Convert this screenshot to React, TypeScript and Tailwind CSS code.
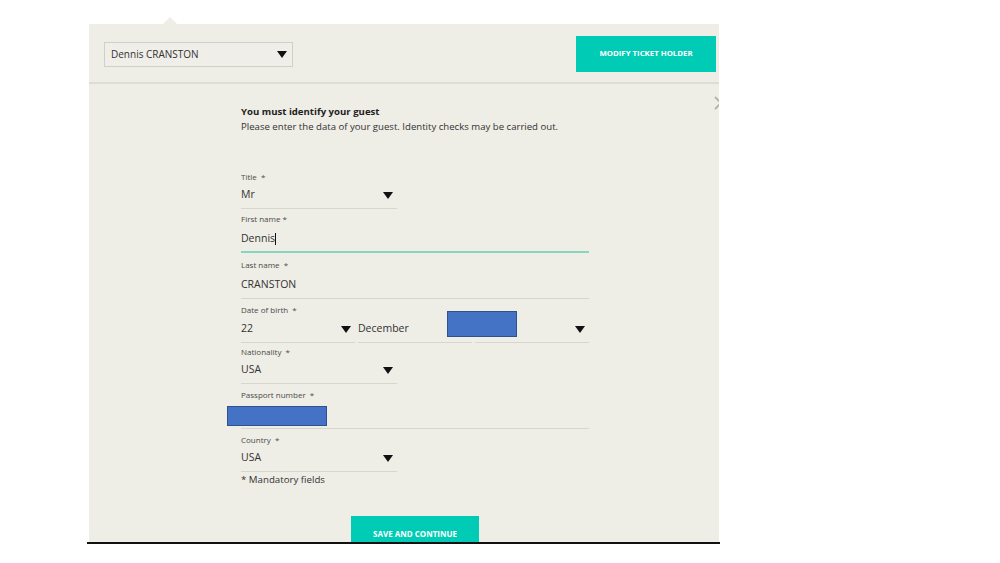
import React from 'react'

const font = { fontFamily: '"Open Sans", "Liberation Sans", sans-serif' }

const Arrow = ({ className = '' }: { className?: string }) => (
    <svg viewBox="0 0 10 7" className={`w-[10px] h-[7px] ${className}`}>
        <polygon points="0,0 10,0 5,7" fill="#111" />
    </svg>
)

interface FieldProps {
    label: string
    children: React.ReactNode
    wide?: boolean
    gap?: string
    row?: string
    line?: string
}

const Field = ({ label, children, wide, gap = 'mt-[5px]', row = 'h-[27px] pt-[5px]', line = 'border-b border-[#d6d5ce]' }: FieldProps) => (
    <div className={`${gap} ${wide ? 'w-[348px]' : 'w-[156px]'}`}>
        <div className="text-[8px] leading-[10px] text-[#4a4a4a] whitespace-pre">{label}</div>
        <div className={`${row} ${line}`}>{children}</div>
    </div>
)

const SelectValue = ({ value }: { value: string }) => (
    <div className="flex items-center justify-between h-[16px] pr-[4px]">
        <span className="text-[10.5px] text-[#333]">{value}</span>
        <Arrow />
    </div>
)

export default function App() {
    return (
        <div className="w-[1000px] h-[563px] bg-white relative overflow-hidden" style={font}>
            <div className="absolute left-[163px] top-[17px] w-0 h-0 border-l-[7px] border-r-[7px] border-b-[7px] border-l-transparent border-r-transparent border-b-[#eeede6]" />
            <div className="ml-[89px] mt-[24px] w-[630px] h-[518px] bg-[#eeede6] relative overflow-hidden">
                {/* header */}
                <div className="h-[60px] border-b-2 border-[#dddcd5] flex items-start justify-between">
                    <div className="ml-[15px] mt-[18px] w-[189px] h-[25px] border border-[#d0cfc8] bg-[#efeee8] flex items-center justify-between pl-[6px] pr-[5px]">
                        <span className="text-[10px] text-[#333]">Dennis CRANSTON</span>
                        <Arrow />
                    </div>
                    <button className="mt-[12px] mr-[3px] w-[140px] h-[36px] bg-[#00cbb4] text-white text-[7.8px] font-bold">
                        MODIFY TICKET HOLDER
                    </button>
                </div>
                <svg viewBox="0 0 14 14" className="absolute left-[625px] top-[72px] w-[14px] h-[14px]">
                    <path d="M1 1 L13 13 M13 1 L1 13" stroke="#b3b2a9" strokeWidth="1.8" fill="none" />
                </svg>

                {/* form */}
                <div className="ml-[152px] relative">
                    <div className="pt-[20px]">
                        <div className="text-[9.6px] leading-[15px] font-bold text-[#222]">You must identify your guest</div>
                        <div className="text-[9.6px] leading-[15px] text-[#333]">Please enter the data of your guest. Identity checks may be carried out.</div>
                    </div>

                    <Field label="Title  *" gap="mt-[38px]">
                        <SelectValue value="Mr" />
                    </Field>

                    <Field label="First name *" wide row="h-[29px] pt-[7px]" line="border-b-2 border-[#86d6bf]">
                        <div className="flex items-center h-[16px]">
                            <span className="text-[10.5px] text-[#333]">Dennis</span>
                            <span className="w-px h-[12px] bg-[#111]" />
                        </div>
                    </Field>

                    <Field label="Last name  *" wide gap="mt-[7px]" row="h-[29px] pt-[7px]">
                        <div className="flex items-center h-[16px]">
                            <span className="text-[10.5px] text-[#333]">CRANSTON</span>
                        </div>
                    </Field>

                    <div className="mt-[6px] w-[348px]">
                        <div className="text-[8px] leading-[10px] text-[#4a4a4a] whitespace-pre">Date of birth  *</div>
                        <div className="grid grid-cols-3 gap-[3px]">
                            <div className="h-[28px] pt-[6px] border-b border-[#d6d5ce]">
                                <SelectValue value="22" />
                            </div>
                            <div className="h-[28px] pt-[6px] border-b border-[#d6d5ce]">
                                <div className="flex items-center h-[16px]">
                                    <span className="text-[10.5px] text-[#333]">December</span>
                                </div>
                            </div>
                            <div className="h-[28px] pt-[6px] border-b border-[#d6d5ce]">
                                <SelectValue value="" />
                            </div>
                        </div>
                    </div>

                    <Field label="Nationality  *" gap="mt-[4px]">
                        <SelectValue value="USA" />
                    </Field>

                    <Field label="Passport number  *" wide gap="mt-[6px]" row="h-[29px]">
                        <div />
                    </Field>

                    <Field label="Country  *" gap="mt-[6px]">
                        <SelectValue value="USA" />
                    </Field>

                    <div className="text-[9.7px] leading-[16px] text-[#333]">* Mandatory fields</div>

                    {/* redaction boxes */}
                    <div className="absolute left-[206px] top-[227px] w-[70px] h-[26px] bg-[#4472c4] border border-[#2f528f]" />
                    <div className="absolute left-[-14px] top-[322px] w-[100px] h-[20px] bg-[#4472c4] border border-[#2f528f]" />
                </div>

                <div className="mt-[28px] ml-[262px]">
                    <button className="w-[128px] h-[36px] bg-[#00cbb4] text-white text-[8px] font-bold">
                        SAVE AND CONTINUE
                    </button>
                </div>
            </div>
            <div className="ml-[87px] w-[633px] h-[2px] bg-[#111]" />
        </div>
    )
}
